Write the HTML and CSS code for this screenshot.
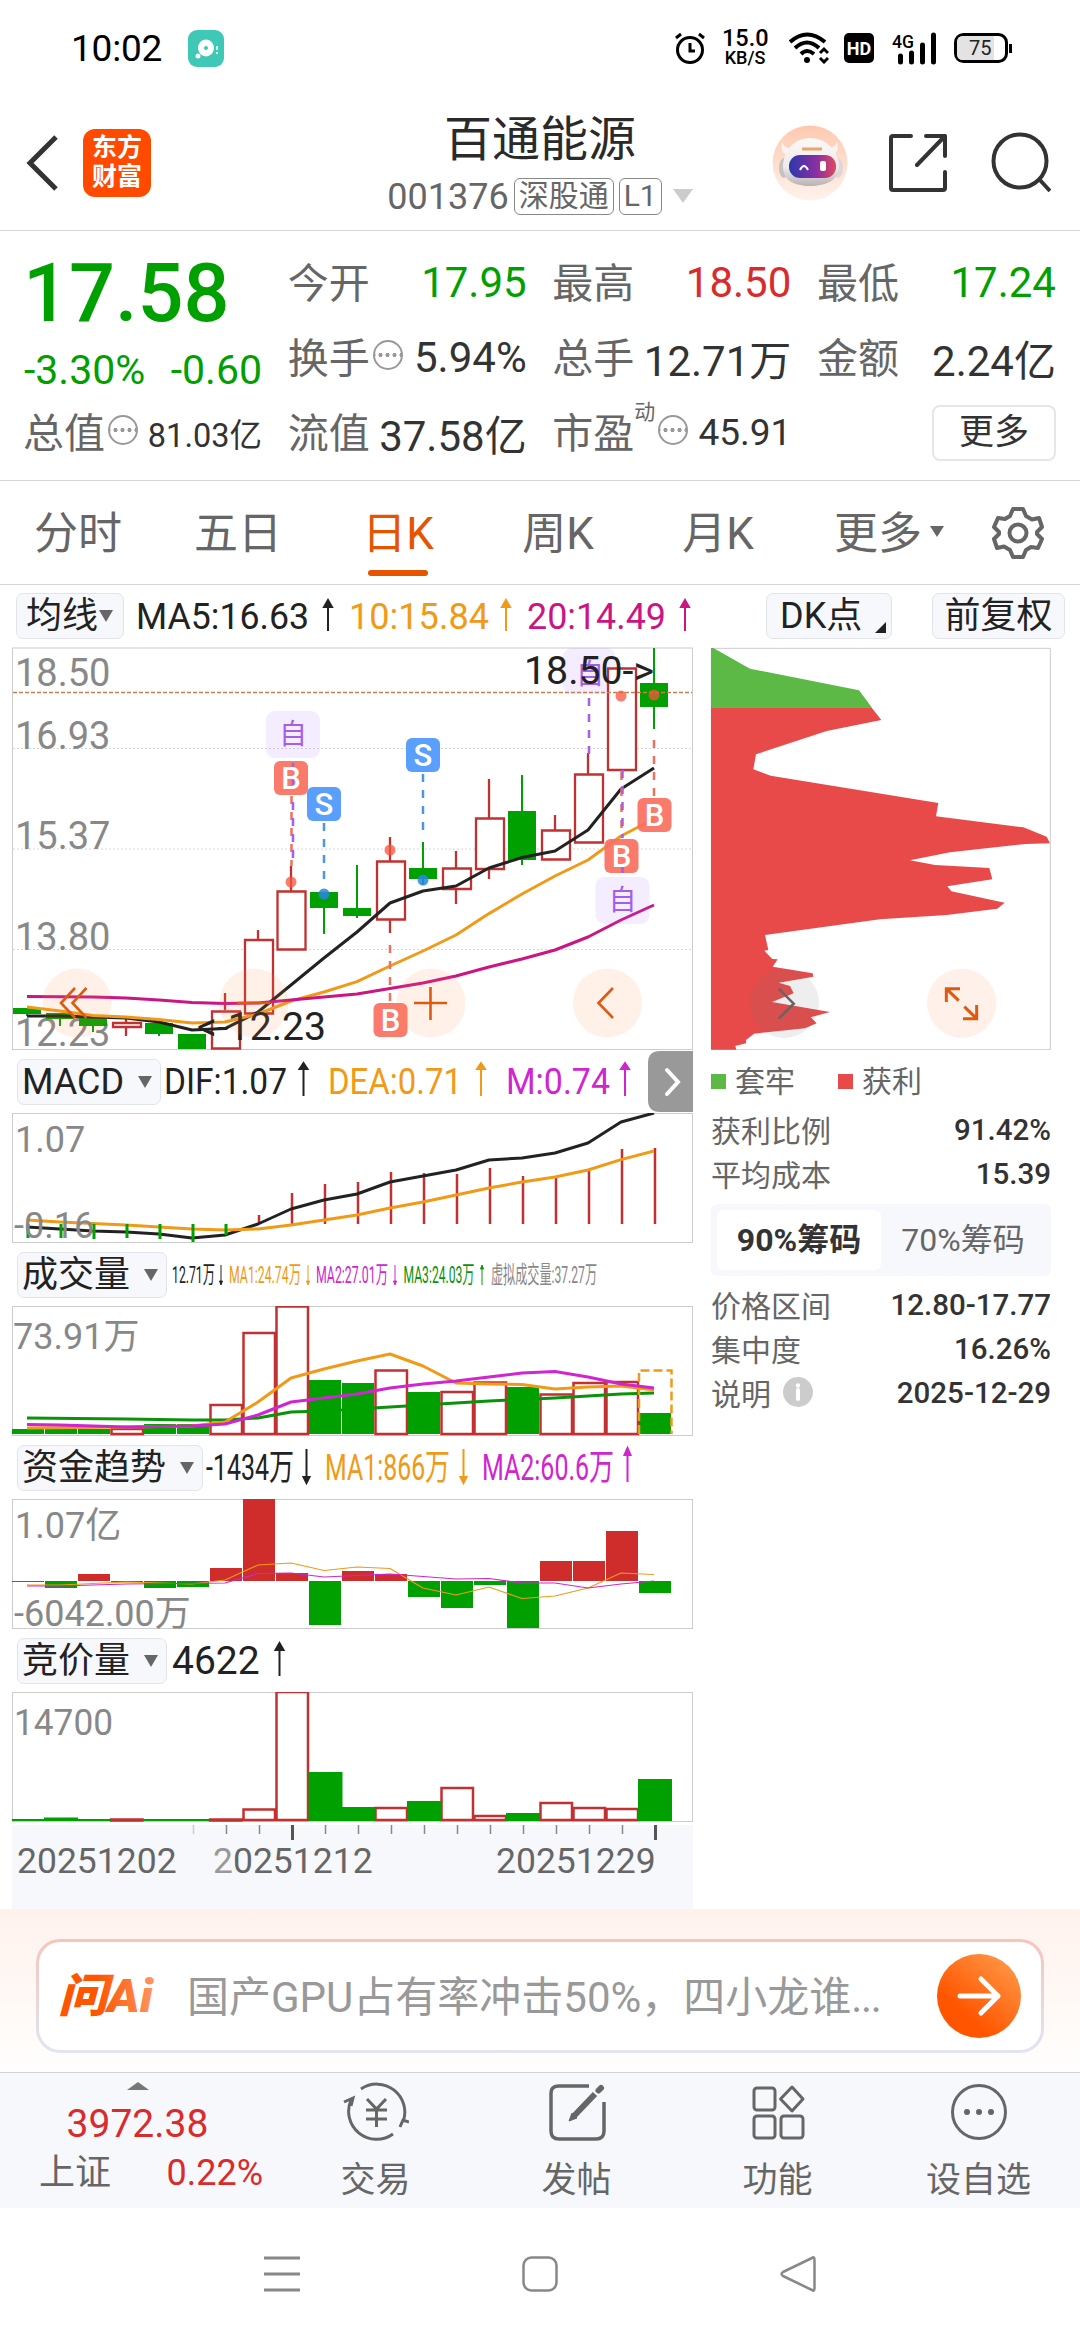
FILE: index.html
```html
<!DOCTYPE html>
<html lang="zh-CN">
<head>
    <meta charset="utf-8">
    <title>百通能源 001376</title>
    <link rel="stylesheet" href="styles.css">
</head>
<body>

    <!-- phone status bar -->
    <div class="status-bar">
        <span class="clock">10:02</span>
        <svg class="app-badge" width="36" height="37" viewBox="0 0 36 37">
            <rect width="36" height="37" rx="9" fill="#3fc8b5"/>
            <ellipse cx="18" cy="18" rx="8" ry="8.500" fill="#fff"/>
            <circle cx="10" cy="26" r="2.500" fill="#fff"/>
            <circle cx="18" cy="18" r="2" fill="#3fc8b5"/>
            <path d="M29 16v4M29 22v2" stroke="#fff" stroke-width="1.500"/>
        </svg>
        <div class="status-icons">
            <svg width="30" height="32" viewBox="0 0 30 32" fill="none" stroke="#000" stroke-width="3">
                <circle cx="15" cy="18" r="12.500"/>
                <path d="M15 11v8h5M1 6l5-4M29 6l-5-4"/>
            </svg>
            <div class="net-speed"><span>15.0</span><span class="unit">KB/S</span></div>
            <svg class="wifi" width="40" height="32" viewBox="0 0 40 32" fill="none" stroke="#000" stroke-width="4">
                <path d="M1 10Q18-5 36 10M6 16Q18 5 30 16M12 22Q18 16 25 22"/>
                <circle cx="18" cy="28" r="3" fill="#000" stroke="none"/>
                <path d="M31 21l4-4 4 4M31 26l4 4 4-4" stroke-width="3"/>
            </svg>
            <span class="hd">HD</span>
            <svg class="signal" width="46" height="32" viewBox="0 0 46 32">
                <text x="0" y="16" font-size="19" font-weight="500" textLength="22" lengthAdjust="spacingAndGlyphs">4G</text>
                <path d="M8.500 24v6M19.500 21v9M30.500 13v17M41.500 3v27" stroke="#000" stroke-width="5" stroke-linecap="round"/>
            </svg>
            <svg class="battery" width="59" height="32" viewBox="0 0 59 32">
                <rect x="1.500" y="2.500" width="51" height="27" rx="8" fill="#fff" stroke="#000" stroke-width="3"/>
                <path d="M9 4H40V28H9Q3 28 3 22V10Q3 4 9 4z" fill="#e3e3e3"/>
                <path d="M56.500 12v9" stroke="#000" stroke-width="3"/>
                <text x="15" y="23" font-size="20" fill="#222">75</text>
            </svg>
        </div>
    </div>

    <!-- title -->
    <div class="header">
        <div class="header-left">
            <svg width="34" height="60" viewBox="0 0 34 60" fill="none" stroke="#333" stroke-width="5">
                <path d="M31 4L5 30 31 56"/>
            </svg>
            <div class="brand">东方<br>财富</div>
        </div>
        <div class="header-title">
            <h1>百通能源</h1>
            <div class="code">
                <span>001376</span><span class="badge">深股通</span><span class="badge">L1</span>
                <svg width="22" height="15" viewBox="0 0 22 15"><path d="M1 0H21L11 14z" fill="#ccc"/></svg>
            </div>
        </div>
        <div class="header-right">
            <svg class="robot" width="76" height="76" viewBox="0 0 76 76">
                <defs>
                    <linearGradient id="halo" x2="0" y2="1"><stop offset="0" stop-color="#fdc9af"/><stop offset="1" stop-color="#fff3ec"/></linearGradient>
                    <linearGradient id="visor"><stop offset="0" stop-color="#2c37ad"/><stop offset=".6" stop-color="#8d2fa0"/><stop offset="1" stop-color="#e04a5c"/></linearGradient>
                    <linearGradient id="shell" x2="0" y2="1"><stop offset="0" stop-color="#fbf8f8"/><stop offset=".6" stop-color="#efebec"/><stop offset="1" stop-color="#b9b2b5"/></linearGradient>
                </defs>
                <circle cx="38" cy="38" r="37.500" fill="url(#halo)"/>
                <path d="M10 17Q8 26 14 30L20 24Q12 23 10 17zM65 17Q68 26 61 30L56 23Q63 23 65 17z" fill="#fbf3ef"/>
                <ellipse cx="12" cy="43" rx="5" ry="10" fill="#c9c0c2"/>
                <ellipse cx="66" cy="43" rx="5" ry="10" fill="#e0d6d6"/>
                <path d="M38 13C55 13 67 27 67 42C67 55 54 61 38 61C22 61 11 55 11 42C11 27 21 13 38 13z" fill="url(#shell)"/>
                <rect x="17" y="30" width="47" height="23" rx="11" fill="url(#visor)"/>
                <path d="M30 24h20" stroke="#e8a46c" stroke-width="3"/>
                <path d="M28 45Q32 37 36 45" fill="none" stroke="#fff" stroke-width="2"/>
                <rect x="48" y="36" width="6" height="10" rx="2" fill="#fff"/>
            </svg>
            <svg class="share" width="58" height="58" viewBox="0 0 58 58" fill="none" stroke="#333" stroke-width="4" stroke-linecap="round" stroke-linejoin="round">
                <path d="M22 2H4Q2 2 2 4V54Q2 56 4 56H54Q56 56 56 54V38M37 2H56V22M56 2L28 31"/>
            </svg>
            <svg class="search" width="60" height="62" viewBox="0 0 60 62" fill="none" stroke="#333" stroke-width="4">
                <circle cx="29" cy="29" r="26.500"/>
                <path d="M48 47L59 59"/>
            </svg>
        </div>
    </div>

    <!-- quote -->
    <div class="quote">
        <div class="col">
            <div class="price green">17.58</div>
            <div class="change green"><span>-3.30%</span><span>-0.60</span></div>
            <div class="row"><label>总值<i class="more-dot"></i></label><b class="small">81.03亿</b></div>
        </div>
        <div class="col">
            <div class="row"><label>今开</label><b class="green">17.95</b></div>
            <div class="row"><label>换手<i class="more-dot"></i></label><b>5.94%</b></div>
            <div class="row"><label>流值</label><b>37.58亿</b></div>
        </div>
        <div class="col">
            <div class="row"><label>最高</label><b class="red">18.50</b></div>
            <div class="row"><label>总手</label><b>12.71万</b></div>
            <div class="row"><label>市盈<sup>动</sup><i class="more-dot"></i></label><b class="mid">45.91</b></div>
        </div>
        <div class="col">
            <div class="row"><label>最低</label><b class="green">17.24</b></div>
            <div class="row"><label>金额</label><b>2.24亿</b></div>
            <div class="row end"><button class="more-button">更多</button></div>
        </div>
    </div>

    <!-- period tabs -->
    <div class="tabs">
        <div class="tab">分时</div>
        <div class="tab">五日</div>
        <div class="tab active">日K</div>
        <div class="tab">周K</div>
        <div class="tab">月K</div>
        <div class="tab drop">更多</div>
        <svg class="gear" width="52" height="54" viewBox="-26 -27 52 54" fill="none" stroke="#666" stroke-width="4" stroke-linejoin="round">
            <path d="M-5-24H5L8-17 14-13.500 21-15 24-6 19-1V1L24 6 20 15 13 14 8 17 5 24H-5L-8 17-14 13.500-21 15-24 6-19 1V-1L-24-6-20-15-13-14-8-17z"/>
            <circle r="8.500"/>
        </svg>
    </div>

    <div class="toolbar">
        <div class="pill ma-pill">均线<i class="tri"></i></div>
        <svg class="legend" width="616" height="62" viewBox="124 585 616 62">
            <g class="t36">
                <text class="k" x="136" y="629" textLength="173" lengthAdjust="spacingAndGlyphs">MA5:16.63</text>
                <text class="o" x="349" y="629" textLength="140" lengthAdjust="spacingAndGlyphs">10:15.84</text>
                <text class="p" x="527" y="629" textLength="139" lengthAdjust="spacingAndGlyphs">20:14.49</text>
            </g>
            <path class="k arrow" d="M328 631V603M324 607L328 600 332 607z"/>
            <path class="o arrow" d="M506 631V603M502 607L506 600 510 607z"/>
            <path class="p arrow" d="M685 631V603M681 607L685 600 689 607z"/>
        </svg>
        <div class="pill dk-pill">DK点<i class="corner"></i></div>
        <div class="pill fq-pill">前复权</div>
    </div>

    <div class="main">
        <div class="charts">

            <!-- candles -->
            <svg width="681" height="403" viewBox="12 647 681 403">
                <rect class="frame" x="12.500" y="648" width="680" height="401.500"/>
                <path class="grid" d="M13 748.500H692M13 849H692M13 949.500H692"/>
                <g class="axis">
                    <text x="15" y="686">18.50</text>
                    <text x="15" y="749">16.93</text>
                    <text x="15" y="849">15.37</text>
                    <text x="15" y="950">13.80</text>
                    <text x="15" y="1046">12.23</text>
                </g>
                <rect class="zi-box" x="562.500" y="648" width="53" height="46" rx="9"/>
                <text class="zi" x="590" y="684">自</text>

                <g class="wick-g">
                    <path d="M27 1008V1016M60 1013V1026M93 1018V1032M159 1023V1036M192 1034V1049M324 892V934M357 865V918M423 842V885M522 775V865M654 648V729"/>
                    <path class="body" d="M13 1008h28v6h-28zM46 1013h28v6h-28zM79 1018h28v8h-28zM145 1023h28v11h-28zM178 1034h28v15h-28zM310 892h28v16h-28zM343 908h28v8h-28zM409 868h28v11h-28zM508 811h28v49h-28zM640 683h28v24h-28z"/>
                </g>
                <g class="wick-r">
                    <path d="M126 1018V1036M225 993V1010M258 930V940M291 866V891M390 837V861M390 920V933M456 851V868M456 889V904M489 779V818M489 869V879M555 815V830M588 753V774"/>
                    <path class="hollow" d="M113 1023h28v4h-28zM212 1011.500h28v37h-28zM245 940h28v73.500h-28zM277.500 891.500h28v58h-28zM377 861.500h28v58h-28zM443 868.500h28v20.500h-28zM476 818.500h28v50.500h-28zM542 830.500h28v29h-28zM575 774.500h28v68h-28zM608 668.500h28v101.500h-28z"/>
                </g>

                <path class="now" d="M13 692.500H692"/>
                <path class="ma k" d="M27 1016 60 1016 93 1017 126 1018 159 1022 192 1030 225 1028.600 258 1012 291 985 324 958 357 932 390 903 423 891 456 886 489 868 522 857.500 555 851 588 830 621 789 654 768"/>
                <path class="ma o" d="M27 1007 60 1011 93 1015.500 126 1017 159 1019.600 192 1023 225 1022 258 1014 291 1001 324 992 357 981.600 390 966 423 951 456 935 489 913.600 522 894 555 876 588 860 621 836 654 819"/>
                <path class="ma p" d="M27 996.600 93 997 126 998 159 1000 192 1002.500 225 1003.600 258 1003 291 1000 357 994 390 988.600 423 983 456 976 489 967 522 959 555 950 588 937 621 920 654 905"/>

                <!-- trade marks -->
                <g class="dash">
                    <path class="buy" d="M291.500 796V866M390 945V1001M654 740V798M621.500 772V838"/>
                    <path class="sell" d="M324 823V880M423 774V832"/>
                    <path class="own" d="M293 802V866M589 698V754M622.500 770V838"/>
                </g>
                <g class="buy-dot"><circle cx="291" cy="882" r="5.500"/><circle cx="390" cy="850" r="5.500"/><circle cx="621" cy="696" r="5.500"/><circle cx="654" cy="695" r="5.500"/></g>
                <g class="sell-dot"><circle cx="324" cy="894" r="5.500"/><circle cx="423" cy="880" r="5.500"/></g>
                <rect class="zi-box" x="266" y="711" width="54" height="47" rx="9"/>
                <rect class="zi-box" x="595.500" y="877" width="54" height="47" rx="9"/>
                <text class="zi" x="293" y="744">自</text>
                <text class="zi" x="622.500" y="910">自</text>
                <g class="buy-box">
                    <rect x="274" y="761" width="34" height="34" rx="6"/><rect x="637.500" y="798" width="34" height="34" rx="6"/>
                    <rect x="604.500" y="839" width="34" height="34" rx="6"/><rect x="373.500" y="1003" width="34" height="34" rx="6"/>
                </g>
                <g class="sell-box"><rect x="307" y="787" width="34" height="34" rx="6"/><rect x="406" y="738" width="34" height="34" rx="6"/></g>
                <path class="dash own" d="M293 763V795M622.500 866V873"/>
                <g class="mark">
                    <text x="291" y="789">B</text><text x="654.500" y="826">B</text><text x="621.500" y="867">B</text><text x="390.500" y="1031">B</text>
                    <text x="324" y="815">S</text><text x="423" y="766">S</text>
                </g>
                <text class="peak" x="524" y="684" textLength="130" lengthAdjust="spacingAndGlyphs">18.50-&gt;</text>
                <text class="peak" x="197" y="1040" textLength="129" lengthAdjust="spacingAndGlyphs">&lt;-12.23</text>

                <!-- floating controls -->
                <g class="ctl">
                    <circle cx="77" cy="1003" r="34.500"/><circle cx="254" cy="1003" r="34.500"/><circle cx="431" cy="1003" r="34.500"/><circle cx="607.500" cy="1003" r="34.500"/>
                    <path d="M75 988L61 1003 75 1018M86.500 988L72.500 1003 86.500 1018M237 1003H270M414 1003H447M430.500 987V1020M613 988L598.500 1003 613 1018"/>
                </g>
            </svg>

            <!-- MACD -->
            <div class="indicator">
                <div class="pill" style="width: 144px"><span>MACD</span><i class="tri"></i></div>
                <svg class="legend" width="532" height="63" viewBox="161 1050 532 63">
                    <g class="t36">
                        <text class="k" x="164" y="1094" textLength="123" lengthAdjust="spacingAndGlyphs">DIF:1.07</text>
                        <text class="o" x="328" y="1094" textLength="134" lengthAdjust="spacingAndGlyphs">DEA:0.71</text>
                        <text class="m" x="506" y="1094" textLength="104" lengthAdjust="spacingAndGlyphs">M:0.74</text>
                    </g>
                    <path class="k arrow" d="M303.500 1096V1066M299.500 1069L303.500 1063 307.500 1069z"/>
                    <path class="o arrow" d="M481 1096V1066M477 1069L481 1063 485 1069z"/>
                    <path class="m arrow" d="M625 1096V1066M621 1069L625 1063 629 1069z"/>
                    <path d="M693 1051H660Q648 1051 648 1063V1100Q648 1112 660 1112H693z" fill="#999"/>
                    <path d="M667 1070L678 1082 667 1094" fill="none" stroke="#fff" stroke-width="4" stroke-linecap="round"/>
                </svg>
            </div>
            <svg width="681" height="130" viewBox="12 1113 681 130">
                <rect class="frame" x="12.500" y="1113.500" width="680" height="129"/>
                <path class="stick-r" d="M259 1224V1215M292 1224V1193M325 1224V1184M358 1224V1182M391 1224V1172M424 1224V1173M457 1224V1174M490 1224V1168M523 1224V1176M556 1224V1178M589 1224V1171M622 1224V1149M655 1224V1148"/>
                <path class="ma k" d="M27 1227 60 1229 93 1231 126 1232 159 1234 192 1238 225 1235 258 1224 291 1209 324 1200 357 1194 390 1182 423 1176 456 1170 489 1160 522 1158 555 1153 588 1143 621 1122 654 1113"/>
                <path class="ma o" d="M27 1220 60 1222 93 1223.500 126 1225 159 1227 192 1229 225 1230 258 1229 291 1225 324 1220 357 1215 390 1208 423 1202 456 1195 489 1188 522 1182 555 1177 588 1170 621 1159.600 654 1151"/>
                <path class="stick-g" d="M28 1224V1238M61 1224V1238M94 1224V1239M127 1224V1238M160 1224V1239M193 1224V1242M226 1224V1235"/>
                <g class="axis s36"><text x="15" y="1152">1.07</text><text x="14" y="1238">-0.16</text></g>
            </svg>

            <!-- volume -->
            <div class="indicator">
                <div class="pill" style="width: 150px"><span>成交量</span><i class="tri"></i></div>
                <svg class="legend" width="526" height="63" viewBox="167 1243 526 63">
                    <g class="t24">
                        <text class="k" x="172" y="1283" textLength="43" lengthAdjust="spacingAndGlyphs">12.71万</text>
                        <text class="o" x="229" y="1283" textLength="72" lengthAdjust="spacingAndGlyphs">MA1:24.74万</text>
                        <text class="m" x="316" y="1283" textLength="72" lengthAdjust="spacingAndGlyphs">MA2:27.01万</text>
                        <text class="g" x="403.500" y="1283" textLength="71" lengthAdjust="spacingAndGlyphs">MA3:24.03万</text>
                        <text class="gray" x="491" y="1283" textLength="106" lengthAdjust="spacingAndGlyphs">虚拟成交量:37.27万</text>
                    </g>
                    <g class="thin">
                        <path class="k arrow" d="M221 1265V1282M219.500 1281L221 1285 222.500 1281z"/>
                        <path class="o arrow" d="M308 1265V1282M306.500 1281L308 1285 309.500 1281z"/>
                        <path class="m arrow" d="M395 1265V1282M393.500 1281L395 1285 396.500 1281z"/>
                        <path class="g arrow" d="M482 1285V1268M480.500 1269L482 1265 483.500 1269z"/>
                    </g>
                </svg>
            </div>
            <svg width="681" height="130" viewBox="12 1306 681 130">
                <rect class="frame" x="12.500" y="1306.500" width="680" height="129"/>
                <path class="bar-r" d="M111.500 1429h31.500v5h-31.500zM210.500 1405h31.500v29h-31.500zM243.500 1333h31.500v101h-31.500zM276.500 1306.500h31.500v127.500h-31.500zM375.500 1370.500h31.500v63.500h-31.500zM441.500 1392h31.500v42h-31.500zM474.500 1382.500h31.500v51.500h-31.500zM540.500 1394.500h31.500v39.500h-31.500zM573.500 1383h31.500v51h-31.500zM606.500 1382h31.500v52h-31.500z"/>
                <path class="ma g" d="M27 1418 126 1419 192 1420 225 1420 258 1418 291 1412 324 1411 390 1407 489 1401 555 1398 621 1394 654 1393"/>
                <path class="bar-g" d="M12 1429h32v5h-32zM45 1429h32v5h-32zM78 1429h32v5h-32zM144 1424h32v10h-32zM177 1424h32v10h-32zM309 1380h32v54h-32zM342 1383h32v51h-32zM408 1392h32v42h-32zM507 1387h32v47h-32zM639 1413h32v21h-32z"/>
                <path class="guess" d="M639 1434V1370.500H671.500V1434"/>
                <path class="ma o" d="M27 1428 126 1427 192 1426 225 1422 258 1402 291 1378 324 1369 357 1361 390 1354 423 1366 456 1383 489 1384 522 1384.500 555 1389 588 1387 621 1386 654 1390"/>
                <path class="ma m" d="M27 1424.600 60 1425 126 1427 192 1426 225 1424 258 1415 291 1402 324 1398 357 1394 390 1388 423 1384 456 1381 489 1377 522 1373 555 1371.500 588 1377 621 1384 654 1388"/>
                <text class="axis s36" x="13" y="1349">73.91万</text>
            </svg>

            <!-- capital flow -->
            <div class="indicator">
                <div class="pill" style="width: 186px"><span>资金趋势</span><i class="tri"></i></div>
                <svg class="legend" width="490" height="63" viewBox="203 1436 490 63">
                    <g class="t36">
                        <text class="k" x="206" y="1480" textLength="88" lengthAdjust="spacingAndGlyphs">-1434万</text>
                        <text class="o" x="325" y="1480" textLength="125" lengthAdjust="spacingAndGlyphs">MA1:866万</text>
                        <text class="m" x="482" y="1480" textLength="132" lengthAdjust="spacingAndGlyphs">MA2:60.6万</text>
                    </g>
                    <path class="k arrow" d="M306.500 1449V1479M303.500 1477L306.500 1483 309.500 1477z"/>
                    <path class="o arrow" d="M463.500 1449V1479M460.500 1477L463.500 1483 466.500 1477z"/>
                    <path class="m arrow" d="M627.500 1482V1452M624.500 1455L627.500 1448 630.500 1455z"/>
                </svg>
            </div>
            <svg width="681" height="130" viewBox="12 1499 681 130">
                <rect class="frame" x="12.500" y="1499.500" width="680" height="129"/>
                <path class="solid-r" d="M78 1574h32v7h-32zM210 1568h32v13h-32zM243 1499h32v82h-32zM276 1573h32v8h-32zM342 1571h32v10h-32zM375 1574h32v7h-32zM540 1561h32v20h-32zM573 1561h32v20h-32zM606 1531h32v50h-32z"/>
                <path class="bar-g" d="M12 1581h32v1h-32zM45 1581h32v7h-32zM111 1581h32v1h-32zM144 1581h32v7h-32zM177 1581h32v6h-32zM309 1581h32v44h-32zM408 1581h32v16h-32zM441 1581h32v27h-32zM474 1581h32v4h-32zM507 1581h32v47h-32zM639 1581h32v12h-32z"/>
                <path class="ma fine o" d="M27 1585 60 1585 126 1582 192 1584 225 1580 258 1565 291 1563 324 1570.500 357 1567 390 1568.500 423 1588 456 1595 489 1587 522 1598.500 555 1596 588 1588 621 1573 654 1574.500"/>
                <path class="ma fine m" d="M27 1586 60 1586 126 1584 225 1583 258 1573.500 291 1573 324 1577 390 1574 456 1579 489 1578.500 522 1583 555 1583 588 1588 621 1584 654 1581"/>
                <g class="axis s36"><text x="15" y="1538">1.07亿</text><text x="14" y="1626">-6042.00万</text></g>
            </svg>

            <!-- call auction -->
            <div class="indicator">
                <div class="pill" style="width: 150px"><span>竞价量</span><i class="tri"></i></div>
                <svg class="legend" width="526" height="63" viewBox="167 1629 526 63">
                    <text class="k" x="172" y="1674" font-size="39">4622</text>
                    <path class="k arrow" d="M279.500 1676V1646M275.500 1650L279.500 1643 283.500 1650z"/>
                </svg>
            </div>
            <svg width="681" height="130" viewBox="12 1692 681 130">
                <rect class="frame" x="12.500" y="1692.500" width="680" height="129"/>
                <path class="bar-r" d="M111 1819.500h31.500v1h-31.500zM210 1819.500h31.500v1h-31.500zM243.500 1809.500h31.500v10.500h-31.500zM276.500 1692h31.500v128h-31.500zM375.500 1808h31.500v12h-31.500zM441.500 1788h31.500v32h-31.500zM474.500 1816h31.500v4h-31.500zM540.500 1803h31.500v17h-31.500zM573.500 1808h31.500v12h-31.500zM606.500 1809h31.500v11h-31.500z"/>
                <path class="bar-g" d="M12 1819h33v2h-33zM44 1817.500h34v3.500h-34zM78 1819h33v2h-33zM143 1819h67v2h-67zM308.500 1772h34v49h-34zM342 1807h33v14h-33zM407 1801h34v20h-34zM506 1813h34v8h-34zM638 1779h34v42h-34z"/>
                <text class="axis s36" x="14" y="1735" textLength="99" lengthAdjust="spacingAndGlyphs">14700</text>
            </svg>

            <!-- dates -->
            <svg width="681" height="87" viewBox="12 1822 681 87">
                <rect x="12" y="1825" width="681" height="84" fill="#f7f8fb"/>
                <path d="M193.500 1825v9" stroke="#ccc" stroke-width="1.500"/>
                <path d="M226.500 1825v9M259.500 1825v9M325.500 1825v9M358.500 1825v9M391.500 1825v9M424.500 1825v9M457.500 1825v9M490.500 1825v9M523.500 1825v9M556.500 1825v9M589.500 1825v9M622.500 1825v9" stroke="#888" stroke-width="1.500"/>
                <path d="M292.500 1825v15M655.500 1825v15" stroke="#555" stroke-width="3"/>
                <g class="date"><text x="17" y="1873">20251202</text><text x="213" y="1873"><tspan fill="#999">2</tspan>0251212</text><text x="496" y="1873">20251229</text></g>
            </svg>
        </div>

        <!-- chip distribution -->
        <div class="chips">
            <svg width="341" height="403" viewBox="90 201 1023 1209">
                <path d="M94 205H1111V1409H94z" fill="none" stroke="#ccc" stroke-width="3"/>
                <path d="M93 204H100L210 266 537 331 575 382H93z" fill="#5cb946"/>
                <path d="M93 382H574L604 420 440 453 228 523 220 568 272 587 775 669 768 709 1030 742 1100 770 1110 790 1035 792 810 817 690 841 765 855 928 864 937 898 802 919 814 934 974 968 952 986 800 1005 600 1018 255 1065 265 1110 253 1112 277 1137 293 1138 278 1160 398 1180 400 1190 296 1208 330 1218 341 1240 276 1266 450 1296 392 1312 410 1330 375 1345 222 1361 198 1380V1390L166 1398 169 1409H93z" fill="#e84a49"/>
                <circle cx="313" cy="1270" r="104" fill="#777" opacity=".12"/>
                <path d="M296 1226L341 1271 296 1316" fill="none" stroke="#666" stroke-width="8"/>
                <circle cx="845" cy="1270" r="104" fill="#fff1e9"/>
                <path d="M799 1266V1226H840M799 1226L836 1262M890 1275V1316H849M890 1316L853 1280" fill="none" stroke="#dd5a12" stroke-width="9"/>
            </svg>
            <div class="chip-legend"><span class="trapped">套牢</span><span class="profit">获利</span></div>
            <div class="chip-row"><span>获利比例</span><b>91.42%</b></div>
            <div class="chip-row"><span>平均成本</span><b>15.39</b></div>
            <div class="toggle"><div class="on">90%筹码</div><div>70%筹码</div></div>
            <div class="chip-row"><span>价格区间</span><b>12.80-17.77</b></div>
            <div class="chip-row"><span>集中度</span><b>16.26%</b></div>
            <div class="chip-row"><span>说明</span><svg class="info" width="30" height="30" viewBox="0 0 30 30"><circle cx="15" cy="15" r="15" fill="#ccc"/><path d="M15 13v9" stroke="#fff" stroke-width="4" stroke-linecap="round"/><circle cx="15" cy="8.500" r="2.200" fill="#fff"/></svg><b>2025-12-29</b></div>
        </div>
    </div>

    <!-- ask AI -->
    <div class="ask">
        <div class="ask-box">
            <svg class="ask-logo" width="100" height="60" viewBox="0 0 100 60">
                <defs><linearGradient id="flame"><stop offset=".4" stop-color="#fd5500"/><stop offset="1" stop-color="#ff9560"/></linearGradient></defs>
                <text x="-1" y="46" textLength="95" lengthAdjust="spacingAndGlyphs" fill="url(#flame)">问Ai</text>
            </svg>
            <span class="ask-text">国产GPU占有率冲击50%，四小龙谁<span class="dots">...</span></span>
            <svg class="go" width="84" height="84" viewBox="0 0 84 84">
                <defs><linearGradient id="send" x1=".3" y1=".7" x2=".9" y2="0"><stop offset="0" stop-color="#ff5500"/><stop offset="1" stop-color="#ff9c4a"/></linearGradient></defs>
                <circle cx="42" cy="42" r="42" fill="url(#send)"/>
                <path d="M23 42H61M44 25L61 42 44 59" fill="none" stroke="#fff" stroke-width="5" stroke-linecap="round" stroke-linejoin="round"/>
            </svg>
        </div>
    </div>

    <!-- bottom menu -->
    <div class="bottom">
        <div class="index">
            <svg width="22" height="8" viewBox="0 0 22 8"><path d="M0 8L11 0 22 8z" fill="#777"/></svg>
            <div class="points">3972.38</div>
            <div class="index-row"><span>上证</span><span class="red">0.22%</span></div>
        </div>
        <div class="item">
            <svg width="66" height="60" viewBox="0 0 66 60" fill="none" stroke="#666" stroke-width="3">
                <path d="M18 7A28 28 0 0 1 60 40M57 45L60 38 66 40M50 52A28 28 0 0 1 8 18M1 20L10 16 8 24"/>
                <path d="M24 17L33.500 27 43 17M23 28H44M23 37H44M33.500 27V45"/>
            </svg>
            <span>交易</span>
        </div>
        <div class="item">
            <svg width="60" height="60" viewBox="0 0 60 60" fill="none" stroke="#666" stroke-width="3.500">
                <path d="M42 4H12Q4 4 4 11V49Q4 57 12 57H49Q57 57 57 49V20"/>
                <path d="M26 35L48 12" stroke-width="6"/>
                <path d="M51.500 8.500L54 6" stroke-width="6" stroke-linecap="round"/>
                <path d="M22 39L25 31 30 36z" fill="#666" stroke-width="1"/>
            </svg>
            <span>发帖</span>
        </div>
        <div class="item">
            <svg width="56" height="60" viewBox="0 0 56 60" fill="none" stroke="#666" stroke-width="3" stroke-linejoin="round">
                <rect x="4" y="6" width="21" height="22" rx="3"/>
                <rect x="4" y="34" width="21" height="22" rx="3"/>
                <rect x="31" y="34" width="22" height="22" rx="3"/>
                <path d="M42 5L53 17 42 29 30.500 17z"/>
            </svg>
            <span>功能</span>
        </div>
        <div class="item">
            <svg width="60" height="60" viewBox="0 0 60 60">
                <circle cx="30" cy="30" r="26.500" fill="none" stroke="#666" stroke-width="3"/>
                <g fill="#666"><circle cx="18" cy="30" r="3"/><circle cx="30" cy="30" r="3"/><circle cx="42" cy="30" r="3"/></g>
            </svg>
            <span>设自选</span>
        </div>
    </div>

    <div class="nav-keys">
        <svg width="36" height="36" viewBox="0 0 36 36" fill="none" stroke="#888" stroke-width="3"><path d="M0 2H36M0 18H36M0 34H36"/></svg>
        <svg width="36" height="36" viewBox="0 0 36 36" fill="none" stroke="#888" stroke-width="2.500"><rect x="1.500" y="1.500" width="33" height="33" rx="8"/></svg>
        <svg width="36" height="36" viewBox="0 0 36 36" fill="none" stroke="#888" stroke-width="2.500" stroke-linejoin="round"><path d="M32 2Q34.500 0 34.500 4V32Q34.500 36 32 34L3 20Q0 18 3 16z"/></svg>
    </div>

</body>
</html>
```

FILE: styles.css
```css
* {
    box-sizing: border-box;
}

body {
    margin: 0;
    width: 1080px;
    height: 2340px;
    overflow: hidden;
    background: #fff;
    color: #333;
    font-family: Roboto, "Noto Sans CJK SC", sans-serif;
}

svg {
    display: block;
    flex: none;
}

b {
    font-weight: 400;
}

i {
    font-style: normal;
}

.green { color: #00a000; }
.red { color: #d92b2b; }

/* status bar */
.status-bar {
    display: flex;
    align-items: center;
    height: 96px;
    padding: 0 67px 0 71px;
    color: #000;
}
.clock {
    font-size: 37px;
    letter-spacing: -0.2px;
}
.app-badge {
    margin-left: 26px;
}
.status-icons {
    display: flex;
    align-items: center;
    margin-left: auto;
}
.net-speed {
    display: flex;
    flex-direction: column;
    width: 46px;
    margin-left: 17px;
    font-size: 23.5px;
    font-weight: 500;
    line-height: 19px;
    text-align: center;
}
.net-speed .unit {
    font-size: 18px;
}
.wifi { margin-left: 21px; }
.hd {
    width: 30px;
    height: 30px;
    margin-left: 15px;
    border-radius: 5px;
    background: #000;
    color: #fff;
    font-size: 18px;
    font-weight: 700;
    line-height: 31px;
    text-align: center;
}
.signal {
    margin-left: 18px;
    overflow: visible;
}
.battery { margin-left: 16px; }

/* title */
.header {
    display: grid;
    grid-template-columns: 1fr auto 1fr;
    height: 135px;
    border-bottom: 1px solid #d4d4d4;
}
.header-left {
    display: flex;
    align-items: center;
    padding-left: 25px;
}
.brand {
    width: 68px;
    height: 68px;
    margin-left: 24px;
    padding-top: 4px;
    border-radius: 12px;
    background: #ff4a00;
    color: #fff;
    font-size: 25px;
    font-weight: 700;
    line-height: 29px;
    text-align: center;
}
.header-title {
    text-align: center;
}
h1 {
    margin: 14px 0 0;
    font-size: 48px;
    font-weight: 400;
    line-height: 60px;
    color: #2a2a2a;
}
.code {
    display: flex;
    align-items: center;
    justify-content: center;
    height: 53px;
    padding-left: 1px;
    font-size: 36px;
    color: #666;
}
.badge {
    height: 37px;
    margin-left: 5px;
    padding: 0 4px;
    border: 1.5px solid #888;
    border-radius: 6px;
    font-size: 30px;
    line-height: 33px;
}
.code svg { margin-left: 10px; }
.header-right {
    display: flex;
    align-items: center;
    justify-content: flex-end;
    padding-right: 29px;
}
.share { margin-left: 41px; }
.search { margin-left: 44px; }

/* quote */
.quote {
    display: flex;
    justify-content: space-between;
    height: 250px;
    padding: 14px 24px 0;
    border-bottom: 1px solid #d4d4d4;
}
.col {
    width: 238px;
}
.price {
    height: 98px;
    margin-left: -1px;
    font-size: 81px;
    font-weight: 500;
    line-height: 98px;
}
.change {
    display: flex;
    justify-content: space-between;
    height: 52px;
    font-size: 41px;
    line-height: 54px;
}
.row {
    display: flex;
    align-items: center;
    justify-content: space-between;
    height: 75px;
    font-size: 42px;
    white-space: nowrap;
}
.row.end { justify-content: flex-end; }
.row label {
    display: flex;
    align-items: center;
    margin: -6px 0 0 -1px;
    font-size: 41px;
    color: #666;
}
.row .small { font-size: 32.5px; }
.row .mid { font-size: 37px; }
.row sup {
    align-self: flex-start;
    font-size: 21px;
    line-height: 24px;
}
.more-dot {
    width: 30px;
    height: 30px;
    margin: 0 0 0 3px;
    border: 2px solid #999;
    border-radius: 50%;
    background: radial-gradient(circle, #999 1.8px, transparent 2.3px) 2px 0 / 7px 26px repeat-x;
}
.more-button {
    width: 124px;
    height: 56px;
    padding: 0;
    border: 2px solid #e6e6e6;
    border-radius: 8px;
    background: #fff;
    font: inherit;
    font-size: 35px;
    line-height: 49px;
    color: #333;
}

/* tabs */
.tabs {
    display: flex;
    align-items: center;
    height: 104px;
    margin-left: -2px;
    border-bottom: 1px solid #d4d4d4;
}
.tab {
    position: relative;
    width: 160px;
    height: 103px;
    font-size: 44px;
    line-height: 107px;
    text-align: center;
    color: #666;
}
.tab.active { color: #e65400; }
.tab.active::after {
    content: "";
    position: absolute;
    left: 50px;
    bottom: 8px;
    width: 60px;
    height: 6px;
    border-radius: 3px;
    background: #e65400;
}
.tab.drop::after {
    content: "";
    position: absolute;
    right: 14px;
    top: 45px;
    border: 7px solid transparent;
    border-top: 11px solid #666;
    border-bottom: 0;
}
.gear { margin-left: 34px; }

/* chart legends */
.toolbar {
    display: flex;
    align-items: center;
    height: 62px;
    padding-left: 16px;
}
.pill {
    display: flex;
    align-items: center;
    flex: none;
    height: 46px;
    border: 1.5px solid #e1e4ea;
    border-radius: 7px;
    background: #f7f8fb;
    font-size: 36px;
    line-height: 42px;
    color: #222;
}
.tri {
    border: 7.5px solid transparent;
    border-top: 12px solid #666;
    border-bottom: 0;
}
.ma-pill {
    width: 108px;
    padding-left: 9px;
}
.ma-pill .tri { margin-left: 1px; }
.dk-pill {
    position: relative;
    width: 126px;
    margin-left: 26px;
    padding-left: 13px;
}
.corner {
    position: absolute;
    right: 5px;
    bottom: 5px;
    border-left: 11px solid transparent;
    border-bottom: 11px solid #222;
}
.fq-pill {
    width: 133px;
    margin-left: 40px;
    justify-content: center;
}
.indicator {
    display: flex;
    align-items: center;
    height: 63px;
    padding-left: 5px;
}
.indicator .pill {
    justify-content: space-between;
    padding: 0 8px 0 4px;
}

/* charts */
.main {
    display: flex;
    height: 1262px;
    padding-left: 12px;
}
.charts {
    width: 681px;
}
.frame {
    fill: none;
    stroke: #ccc;
}
.grid {
    stroke: #d6d6d6;
    stroke-dasharray: 2 2;
}
.now {
    stroke: #c87f4c;
    stroke-width: 1.5;
    stroke-dasharray: 4 2;
}
.axis {
    font-size: 38px;
    fill: #888;
}
.s36 { font-size: 36px; }
.t36 { font-size: 36px; }
.t24 { font-size: 24px; }
.k { fill: #222; stroke: #222; }
.o { fill: #f09a18; stroke: #f09a18; }
.p { fill: #cb1583; stroke: #cb1583; }
.m { fill: #cf26cf; stroke: #cf26cf; }
.g { fill: #0a930a; stroke: #0a930a; }
.gray { fill: #888; }
.legend text { stroke: none; }
.arrow { stroke-width: 2; }
.thin .arrow { stroke-width: 1; }
.ma {
    fill: none;
    stroke-width: 3;
    stroke-linejoin: round;
}
.ma.fine { stroke-width: 1.2; }
.wick-g {
    fill: #00a000;
    stroke: #00a000;
    stroke-width: 2;
}
.wick-g .body { stroke: none; }
.wick-r {
    fill: #fff;
    stroke: #c23131;
    stroke-width: 2.3;
}
.stick-r { stroke: #c23131; stroke-width: 2.5; }
.stick-g { stroke: #00a000; stroke-width: 3; }
.bar-r {
    fill: #fff;
    stroke: #c23131;
    stroke-width: 2.5;
}
.bar-g { fill: #00a000; }
.solid-r { fill: #cf2c2c; }
.guess {
    fill: none;
    stroke: #f09a18;
    stroke-width: 2.5;
    stroke-dasharray: 9 4;
}
.dash path,
path.dash {
    stroke-width: 2.5;
    stroke-dasharray: 8 8;
}
.buy { stroke: #f0705c; }
.sell { stroke: #4d94ea; }
.own { stroke: #a45fe8; }
.buy-dot { fill: #f9543a; opacity: .75; }
.sell-dot { fill: #2a86e0; opacity: .85; }
.buy-box { fill: #fa6f5f; opacity: .92; }
.sell-box { fill: #5a9ffc; }
.mark {
    fill: #fff;
    font-size: 31px;
    font-weight: 500;
    text-anchor: middle;
}
.zi-box { fill: #a45fff; opacity: .12; }
.zi {
    fill: #a45fe8;
    font-size: 28px;
    text-anchor: middle;
}
.peak {
    fill: #222;
    font-size: 38px;
}
.ctl circle {
    fill: #ff8040;
    opacity: .12;
}
.ctl path {
    fill: none;
    stroke: #dd5a12;
    stroke-width: 2.6;
}
.date {
    font-size: 35.5px;
    fill: #666;
}

/* chip distribution */
.chips {
    width: 341px;
    margin-left: 17px;
}
.chip-legend {
    display: flex;
    height: 57px;
    padding: 3px 0 0 1px;
    font-size: 30px;
    line-height: 57px;
    color: #666;
}
.chip-legend span::before {
    content: "";
    display: inline-block;
    width: 15px;
    height: 15px;
    margin-right: 9px;
    vertical-align: 3px;
}
.trapped::before { background: #5cb946; }
.profit::before { background: #e84a49; }
.profit { margin-left: 43px; }
.chip-row {
    display: flex;
    align-items: center;
    height: 44px;
    padding-left: 1px;
    font-size: 30px;
    color: #666;
}
.chip-row b {
    margin: 2px 0 0 auto;
    font-size: 29.5px;
    font-weight: 500;
    color: #333;
}
.info { margin-left: 12px; }
.toggle {
    display: flex;
    height: 72px;
    margin: 9px 0 6px 1px;
    padding: 6px;
    border-radius: 6px;
    background: #f7f8fb;
    font-size: 32px;
    line-height: 60px;
    text-align: center;
    color: #666;
}
.toggle div { flex: 1; }
.toggle .on {
    border-radius: 6px;
    background: #fff;
    font-weight: 700;
    color: #333;
}

/* ask AI */
.ask {
    height: 163px;
    padding: 30px 36px 0;
    background: linear-gradient(#fff2ed, #fffefd);
}
.ask-box {
    display: flex;
    align-items: center;
    height: 114px;
    padding: 0 20px;
    border: 3px solid transparent;
    border-radius: 24px;
    background: linear-gradient(#fff, #fff) padding-box, linear-gradient(#f7c4b9, #dfe6f3) border-box;
}
.ask-logo text {
    font-size: 46px;
    font-weight: 900;
    font-style: italic;
}
.ask-text {
    margin: -5px auto 0 28px;
    font-size: 42px;
    color: #999;
    white-space: nowrap;
}
.dots { letter-spacing: -1.3px; }

/* bottom menu */
.bottom {
    display: flex;
    height: 136px;
    border-top: 1px solid #d0d4da;
    background: #f7f8fb;
}
.index {
    display: flex;
    flex-direction: column;
    align-items: center;
    width: 275px;
    padding-top: 9px;
}
.points {
    margin-top: 11px;
    font-size: 39px;
    line-height: 46px;
    color: #d92b2b;
}
.index-row {
    display: flex;
    justify-content: space-between;
    width: 224px;
    margin: 2px 0 0 27px;
    font-size: 36px;
    line-height: 48px;
    color: #666;
}
.index-row .red { color: #d92b2b; }
.item {
    display: flex;
    flex-direction: column;
    align-items: center;
    width: 201px;
    padding-top: 9px;
    font-size: 35px;
    line-height: 77px;
    color: #666;
}

.nav-keys {
    display: flex;
    justify-content: space-between;
    padding: 48px 264px 0;
}
```
